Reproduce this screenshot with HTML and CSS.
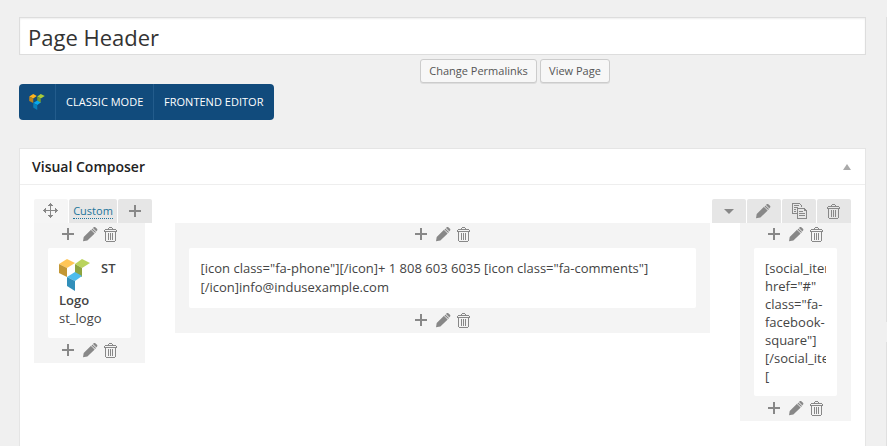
FILE: index.html
```html
<!DOCTYPE html>
<html lang="en">
<head>
<meta charset="utf-8">
<title>Page Header</title>
<link rel="stylesheet" href="styles.css">
</head>
<body>
<svg width="0" height="0" class="defs" aria-hidden="true">
  <symbol id="plus" viewBox="0 0 12 12"><path d="M5 0h2v5h5v2H7v5H5V7H0V5h5z"/></symbol>
  <symbol id="pencil" viewBox="0 0 15 15"><path d="M0 14.2L.7 9.9L8 2.8L11.7 6.5L4.4 13.6zM8.4 2.4L9.4 1.4L13 5L12.1 6.1zM9.8 1L10.8 .2C11.3-.2 12.1-.1 12.6.4L14 1.8C14.5 2.3 14.5 3 14 3.5L13.3 4.6z"/><path class="dash" d="M8.2 2.5L12.2 6.5M9.7 1.2L13.4 4.9"/></symbol>
  <symbol id="trash" viewBox="0 0 13 15"><path d="M5 0h3v1h1v1h3v1h1v2H0V3h1V2h3V1h1zM5 1v1h3V1zM1 3v1h11V3zM1 5h1v9H1zM11 5h1v9h-1zM2 14h9v1H2zM4 6h1v7H4zM6 6h1v7H6zM8 6h1v7H8z" fill-rule="evenodd"/></symbol>
  <symbol id="copy" viewBox="0 0 15 16"><path d="M0 0h8v1H1v9h4v1H0zM8 1h1v1h1v2H9V2H8zM2 2h5v1H2zM2 4h4v1H2zM2 6h2v1H2zM2 8h2v1H2z"/><path fill-rule="evenodd" d="M5 5h8v1h1v1h1v9H5zM6 6v9h8V8h-2V6zM7 8h4v1H7zM7 10h6v1H7zM7 12h6v1H7z"/></symbol>
  <symbol id="move" viewBox="0 0 15 15"><path d="M7 2h1v5h5v1H8v5H7V8H2V7h5zM7 0h1v1h1v1h1v1H5V2h1V1h1zM5 12h5v1H9v1H8v1H7v-1H6v-1H5zM0 7h1V6h1V5h1v5H2V9H1V8H0zM12 5h1v1h1v1h1v1h-1v1h-1v1h-1z"/></symbol>
  <symbol id="cubes" viewBox="0 0 31 32">
    <path fill="#ffc657" d="M0 5L8 0L16 4L8 9z"/><path fill="#c39735" d="M0 5L8 9V18L0 14z"/>
    <path fill="#bad45c" d="M16 5L23 0L31 4L23 9z"/><path fill="#8ea43f" d="M16 5L23 9V18L16 14z"/>
    <path fill="#4ebcec" d="M8 18L16 13L23 17L16 22z"/><path fill="#318fba" d="M8 18L16 22V32L8 27z"/>
  </symbol>
  <symbol id="cubes-small" viewBox="0 0 31 32">
    <path fill="#ffb51d" d="M0 5L8 0L15 4L8 9z"/><path fill="#bd841c" d="M0 5L8 9V18L0 14z"/>
    <path fill="#a8cc3a" d="M16 5L23 0L31 4L23 9z"/><path fill="#759b2d" d="M16 5L23 9V18L16 14z"/>
    <path fill="#08a9ec" d="M8 18L16 13L23 17L16 22z"/><path fill="#087fb9" d="M8 18L16 22V32L8 27z"/>
  </symbol>
</svg>

<main class="page">
  <div class="title">Page Header</div>
  <div class="links"><span class="button wide">Change Permalinks</span><span class="button">View Page</span></div>
  <nav class="modes">
    <span class="brand"><svg width="16" height="16"><use href="#cubes-small"/></svg></span>
    <span class="mode classic">CLASSIC MODE</span>
    <span class="mode">FRONTEND EDITOR</span>
  </nav>

  <section class="panel">
    <header class="panel-head"><h2>Visual Composer</h2><i class="arrow-up"></i></header>
    <div class="panel-body">
      <div class="row-controls">
        <span class="tab light"><svg class="crisp" width="15" height="15"><use href="#move"/></svg></span>
        <span class="tab custom"><a>Custom</a></span>
        <span class="tab"><svg class="crisp" width="12" height="12"><use href="#plus"/></svg></span>
        <span class="spacer"></span>
        <span class="tab"><i class="arrow-down"></i></span>
        <span class="tab odd"><svg width="15" height="15"><use href="#pencil"/></svg></span>
        <span class="tab copy"><svg class="crisp" width="15" height="16"><use href="#copy"/></svg></span>
        <span class="tab odd"><svg class="crisp" width="13" height="15"><use href="#trash"/></svg></span>
      </div>
      <div class="columns">
        <div class="column narrow">
          <div class="tools"><svg class="crisp" width="12" height="12"><use href="#plus"/></svg><svg width="15" height="15"><use href="#pencil"/></svg><svg class="crisp" width="13" height="15"><use href="#trash"/></svg></div>
          <div class="card logo"><svg width="31" height="32"><use href="#cubes"/></svg><b>ST Logo</b><span>st_logo</span></div>
          <div class="tools bottom"><svg class="crisp" width="12" height="12"><use href="#plus"/></svg><svg width="15" height="15"><use href="#pencil"/></svg><svg class="crisp" width="13" height="15"><use href="#trash"/></svg></div>
        </div>
        <div class="column main">
          <div class="tools"><svg class="crisp" width="12" height="12"><use href="#plus"/></svg><svg width="15" height="15"><use href="#pencil"/></svg><svg class="crisp" width="13" height="15"><use href="#trash"/></svg></div>
          <div class="card text">[icon class="fa-phone"][/icon]+ 1 808 603 6035 [icon class="fa-comments"]<br>[/icon]info@indusexample.com</div>
          <div class="tools bottom"><svg class="crisp" width="12" height="12"><use href="#plus"/></svg><svg width="15" height="15"><use href="#pencil"/></svg><svg class="crisp" width="13" height="15"><use href="#trash"/></svg></div>
        </div>
        <div class="column narrow">
          <div class="tools"><svg class="crisp" width="12" height="12"><use href="#plus"/></svg><svg width="15" height="15"><use href="#pencil"/></svg><svg class="crisp" width="13" height="15"><use href="#trash"/></svg></div>
          <div class="card social"><div class="clip">[social_item<br>href="#"<br>class="fa-<br>facebook-<br>square"]<br>[/social_item]<br>[</div></div>
          <div class="tools bottom"><svg class="crisp" width="12" height="12"><use href="#plus"/></svg><svg width="15" height="15"><use href="#pencil"/></svg><svg class="crisp" width="13" height="15"><use href="#trash"/></svg></div>
        </div>
      </div>
    </div>
  </section>
</main>
<aside class="edge"><div class="edge-top"></div><div class="edge-bottom"></div></aside>
</body>
</html>
```
FILE: styles.css
```css
* { box-sizing: border-box; }
body {
  margin: 0;
  height: 446px;
  overflow: hidden;
  display: flex;
  background: #f0f0f0;
  font-family: "Open Sans", sans-serif;
  font-size: 13px;
  color: #444;
}
svg { display: block; flex: none; fill: #888; }
.defs { position: absolute; }
.crisp { shape-rendering: crispEdges; }
.dash { stroke: #f4f4f4; stroke-width: .6; stroke-dasharray: 1 .7; }
.page { width: 847px; margin: 17px 0 0 19px; }
.title {
  height: 38px;
  padding: 0 8px;
  border: 1px solid #ddd;
  box-shadow: inset 0 1px 2px rgba(0,0,0,.07);
  background: #fff;
  color: #333;
  font-size: 22px;
  line-height: 38px;
}
.links { display: flex; gap: 3px; margin: 4px 0 0 401px; }
.button {
  width: 70px;
  height: 24px;
  border: 1px solid #ccc;
  border-radius: 3px;
  background: #f7f7f7;
  box-shadow: 0 1px 0 rgba(0,0,0,.08);
  color: #555;
  font-size: 11px;
  line-height: 22px;
  text-align: center;
}
.button.wide { width: 117px; }
.modes {
  display: flex;
  width: 255px;
  height: 36px;
  margin-top: 1px;
  border-radius: 4px;
  background: #114b7c;
  color: #fff;
}
.brand { display: flex; align-items: center; width: 37px; padding-left: 10px; border-right: 1px solid #235c8c; }
.mode { flex: 1; padding-left: 10px; font-size: 11px; font-weight: 500; line-height: 36px; letter-spacing: .02px; white-space: nowrap; }
.mode.classic { flex: none; width: 98px; border-right: 1px solid #235c8c; }
.panel { height: 320px; margin-top: 28px; border: 1px solid #e5e5e5; background: #fff; }
.panel-head {
  display: flex;
  align-items: center;
  justify-content: space-between;
  height: 36px;
  padding: 0 14px 0 12px;
  border-bottom: 1px solid #eee;
}
h2 { margin: 0; color: #222; font-size: 14px; font-weight: 600; line-height: 20px; }
.arrow-up { border: 4px solid transparent; border-top: 0; border-bottom: 6px solid #aaa; }
.arrow-down { border: 5px solid transparent; border-bottom: 0; border-top-color: #888; }
.panel-body { padding: 14px 14px 0; }
.row-controls { display: flex; gap: 1px; height: 24px; }
.tab {
  display: flex;
  align-items: center;
  justify-content: center;
  width: 34px;
  border-radius: 2px 2px 0 0;
  background: #e6e6e6;
}
.tab.light { background: #f5f5f5; padding: 0 1px 1px 0; }
.tab.odd { padding: 1px 1px 0 0; }
.tab.copy { padding-left: 1px; }
.tab.custom { width: 48px; }
.tab a { border-bottom: 1px dotted #21759b; color: #21759b; font-size: 11px; line-height: 14px; }
.spacer { flex: 1; }
.columns { display: flex; align-items: flex-start; gap: 30px; }
.column { padding: 0 14px; background: #f4f4f4; }
.narrow { width: 111px; }
.main { flex: 1; }
.tools { display: flex; align-items: flex-start; height: 25px; padding-top: 4px; }
.tools { justify-content: center; }
.tools.bottom { padding-top: 5px; }
.tools svg:first-child { margin-top: 1px; }
.tools svg + svg { margin-left: 9px; }
.tools svg + svg + svg { margin-left: 6px; }
.narrow .tools { justify-content: flex-start; padding-left: 14px; }
.main .tools { justify-content: flex-start; padding-left: 226px; }
.card { border-radius: 2px; background: #fff; line-height: 18px; }
.logo { height: 90px; padding: 11px; }
.logo svg { float: left; margin-right: 11px; }
.logo b { display: block; font-weight: 600; }
.logo span { display: block; }
.text { height: 60px; padding: 11px 11px 11px 11.5px; line-height: 19px; white-space: nowrap; }
.social { height: 148px; padding: 11px; }
.clip { overflow: hidden; white-space: nowrap; }
.edge { display: flex; flex-direction: column; gap: 20px; width: 1px; margin: 17px 0 0 auto; }
.edge-top { height: 305px; background: #e0e0e0; }
.edge-bottom { flex: 1; background: #e0e0e0; }
```
